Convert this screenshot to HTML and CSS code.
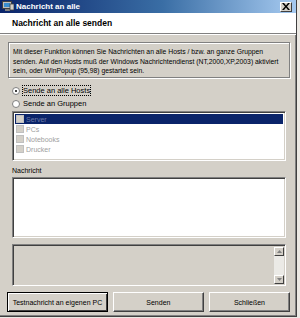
FILE: index.html
```html
<!DOCTYPE html>
<html lang="de">
<head>
    <meta charset="UTF-8">
    <title>Nachricht an alle</title>
    <link rel="stylesheet" href="styles.css">
</head>
<body>
    <div class="window">
        <div class="titlebar">
            <svg class="app-icon" width="12" height="11" viewBox="0 0 12 11">
                <rect x="0.5" y="0.5" width="9" height="7" fill="#c0c0c0" stroke="#404040"/>
                <rect x="2" y="2" width="6" height="4" fill="#3a8ed0"/>
                <rect x="3" y="8" width="5" height="2" fill="#808080"/>
                <rect x="8" y="3" width="4" height="6" fill="#d4d0c8" stroke="#404040" stroke-width="0.8"/>
            </svg>
            <span class="title">Nachricht an alle</span>
            <button class="close-btn">
                <svg width="8" height="7" viewBox="0 0 8 7"><path d="M0 0L2 0L4 2.5L6 0L8 0L5 3.5L8 7L6 7L4 4.5L2 7L0 7L3 3.5Z" fill="#000"/></svg>
            </button>
        </div>
        <div class="header">Nachricht an alle senden</div>
        <div class="content">
            <div class="info">
                Mit dieser Funktion können Sie Nachrichten an alle Hosts / bzw. an ganze Gruppen<br>
                senden. Auf den Hosts muß der Windows Nachrichtendienst (NT,2000,XP,2003) aktiviert<br>
                sein, oder WinPopup (95,98) gestartet sein.
            </div>
            <div class="radio-row first">
                <span class="radio checked"></span>
                <span class="focus">Sende an alle Hosts</span>
            </div>
            <div class="radio-row">
                <span class="radio"></span>
                <span>Sende an Gruppen</span>
            </div>
            <div class="listbox">
                <div class="item selected"><span class="check"></span>Server</div>
                <div class="item"><span class="check"></span>PCs</div>
                <div class="item"><span class="check"></span>Notebooks</div>
                <div class="item"><span class="check"></span>Drucker</div>
            </div>
            <div class="label">Nachricht</div>
            <div class="message"></div>
            <div class="log">
                <div class="scrollbar">
                    <div class="arrow"><svg width="5" height="3" viewBox="0 0 5 3"><path d="M0 3L2.5 0L5 3Z" fill="#808080"/></svg></div>
                    <div class="track"></div>
                    <div class="arrow"><svg width="5" height="3" viewBox="0 0 5 3"><path d="M0 0L2.5 3L5 0Z" fill="#808080"/></svg></div>
                </div>
            </div>
            <div class="buttons">
                <button class="btn default">Testnachricht an eigenen PC</button>
                <button class="btn">Senden</button>
                <button class="btn">Schließen</button>
            </div>
        </div>
    </div>
</body>
</html>
```

FILE: styles.css
```css
body {
    margin: 0;
    background-color: #ece9e4;
    font-family: "Liberation Sans", Arial, sans-serif;
    font-size: 7px;
    color: #000;
}
.window {
    width: 296px;
    height: 316px;
    background-color: #d4d0c8;
    border-right: 1px solid #404040;
    border-bottom: 1px solid #404040;
    box-shadow: inset -1px -1px 0 #808080;
    display: flex;
    flex-direction: column;
}
.titlebar {
    height: 13px;
    background: linear-gradient(to right, #0a246a, #3a6ea5 55%, #a6caf0);
    display: flex;
    align-items: center;
    padding: 0 2px;
}
.app-icon {
    margin-right: 2px;
}
.title {
    color: #fff;
    font-weight: bold;
    font-size: 8px;
    flex: 1;
}
.close-btn {
    width: 12px;
    height: 10px;
    padding: 0;
    margin-right: 2px;
    background-color: #d4d0c8;
    border: 1px solid;
    border-color: #fff #404040 #404040 #fff;
    display: flex;
    align-items: center;
    justify-content: center;
}
.header {
    height: 20px;
    background-color: #fff;
    font-weight: bold;
    font-size: 8.5px;
    padding-left: 12px;
    display: flex;
    align-items: center;
    border-bottom: 1px solid #808080;
    box-shadow: 0 1px 0 #fff;
}
.content {
    flex: 1;
    display: flex;
    flex-direction: column;
    padding: 8px 6px 0 8px;
}
.info {
    height: 26px;
    border: 1px solid #808080;
    box-shadow: inset 1px 1px 0 #fff, 1px 1px 0 #fff;
    padding: 4px 4px;
    line-height: 9.5px;
    font-size: 6.8px;
    white-space: nowrap;
}
.radio-row {
    display: flex;
    align-items: center;
    height: 13px;
    padding-left: 4px;
    font-size: 7.5px;
}
.radio-row.first {
    margin-top: 6px;
}
.radio {
    width: 6px;
    height: 6px;
    border-radius: 50%;
    background-color: #fff;
    border: 1px solid #808080;
    margin-right: 3px;
    display: flex;
    align-items: center;
    justify-content: center;
}
.radio.checked::after {
    content: "";
    width: 2px;
    height: 2px;
    border-radius: 50%;
    background-color: #000;
}
.focus {
    outline: 1px dotted #000;
}
.listbox {
    height: 44px;
    margin: 1px 4px 0 4px;
    background-color: #fff;
    border: 1px solid;
    border-color: #808080 #fff #fff #808080;
    box-shadow: inset 1px 1px 0 #404040, inset -1px -1px 0 #d4d0c8;
    padding: 2px 2px;
}
.item {
    height: 10px;
    display: flex;
    align-items: center;
    color: #a0a0a0;
}
.item.selected {
    background-color: #0a246a;
    color: #6a7aa8;
}
.check {
    width: 6px;
    height: 6px;
    border: 1px solid #c0c0c0;
    background-color: #d4d0c8;
    margin: 0 2px 0 1px;
}
.label {
    margin: 6px 4px 0 4px;
    height: 9px;
}
.message {
    height: 59px;
    margin: 1px 4px 0 4px;
    background-color: #fff;
    border: 1px solid;
    border-color: #808080 #fff #fff #808080;
    box-shadow: inset 1px 1px 0 #404040, inset -1px -1px 0 #d4d0c8;
}
.log {
    height: 37px;
    margin: 6px 4px 0 4px;
    background-color: #d4d0c8;
    border: 1px solid;
    border-color: #808080 #fff #fff #808080;
    box-shadow: inset 1px 1px 0 #404040;
    display: flex;
    justify-content: flex-end;
    padding: 2px 1px 1px 0;
}
.scrollbar {
    width: 10px;
    display: flex;
    flex-direction: column;
    background-color: #ebeae6;
}
.arrow {
    height: 9px;
    background-color: #d4d0c8;
    border: 1px solid;
    border-color: #fff #404040 #404040 #fff;
    box-sizing: border-box;
    display: flex;
    align-items: center;
    justify-content: center;
}
.track {
    flex: 1;
}
.buttons {
    display: flex;
    gap: 5px;
    margin: 6px 0 0 -1px;
}
.btn {
    height: 20px;
    background-color: #d4d0c8;
    border: 1px solid;
    border-color: #fff #404040 #404040 #fff;
    box-shadow: inset -1px -1px 0 #808080;
    font-family: "Liberation Sans", Arial, sans-serif;
    font-size: 7px;
    padding: 0;
    color: #000;
}
.btn:nth-child(1) {
    width: 102px;
}
.btn:nth-child(2) {
    width: 92px;
}
.btn:nth-child(3) {
    width: 82px;
}
.btn.default {
    border: 1px solid #000;
    box-shadow: inset 1px 1px 0 #fff, inset -1px -1px 0 #404040;
}
```
